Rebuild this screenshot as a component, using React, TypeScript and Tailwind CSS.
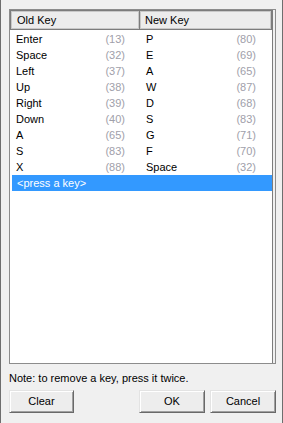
const rows: [string, number, string, number][] = [
  ["Enter", 13, "P", 80],
  ["Space", 32, "E", 69],
  ["Left", 37, "A", 65],
  ["Up", 38, "W", 87],
  ["Right", 39, "D", 68],
  ["Down", 40, "S", 83],
  ["A", 65, "G", 71],
  ["S", 83, "F", 70],
  ["X", 88, "Space", 32],
];

function Btn({ label, w }: { label: string; w: string }) {
  return (
    <button
      type="button"
      className={`${w} h-[23px] bg-[#ededed] border border-t-[#e3e3e3] border-l-[#e3e3e3] border-b-[#696969] border-r-[#696969] shadow-[inset_1px_1px_0_#ffffff,inset_-1px_-1px_0_#a0a0a0] flex items-center justify-center leading-none`}
    >
      {label}
    </button>
  );
}

export default function App() {
  return (
    <div className="w-[283px] h-[423px] bg-[#f0f0f0] border-x border-[#6e6e6e] pl-[8px] pr-[6px] pt-[9px] flex flex-col font-['Liberation_Sans',Arial,sans-serif] text-[11px] text-black">
      <div className="h-[355px] border border-[#8c8c8c] bg-white flex">
        <div className="w-[262px] flex flex-col">
          <div className="h-[20px] flex">
            <div className="w-[130px] h-full bg-[#ececec] border border-[#7c7c7c] shadow-[inset_0_0_0_1px_#c8c8c8] flex items-center pl-[6px]">
              Old Key
            </div>
            <div className="flex-1 h-full bg-[#ececec] border border-l-0 border-[#7c7c7c] shadow-[inset_0_0_0_1px_#c8c8c8] flex items-center pl-[5px]">
              New Key
            </div>
          </div>
          <div className="mt-[1px] flex flex-col">
            {rows.map(([a, an, b, bn]) => (
              <div key={a + b} className="h-[16px] flex items-center">
                <div className="w-[130px] flex justify-between pl-[6px] pr-[15px]">
                  <span>{a}</span>
                  <span className="text-[#a0a0aa]">({an})</span>
                </div>
                <div className="flex-1 flex justify-between pl-[6px] pr-[16px]">
                  <span>{b}</span>
                  <span className="text-[#a0a0aa]">({bn})</span>
                </div>
              </div>
            ))}
            <div className="h-[16px] ml-[2px] bg-[#3399ff] text-white flex items-center pl-[5px]">
              &lt;press a key&gt;
            </div>
          </div>
        </div>
        <div className="flex-1 border-l border-[#7c7c7c] bg-[#f0f0f0]" />
      </div>
      <div className="mt-[6px] h-[16px] flex items-center">Note: to remove a key, press it twice.</div>
      <div className="mt-[4px] flex">
        <Btn label="Clear" w="w-[65px]" />
        <div className="flex-1" />
        <Btn label="OK" w="w-[66px]" />
        <div className="w-[5px]" />
        <Btn label="Cancel" w="w-[66px]" />
      </div>
    </div>
  );
}
